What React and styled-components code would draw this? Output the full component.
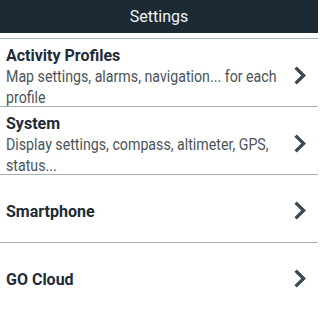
import styled, { createGlobalStyle } from "styled-components";

const GlobalStyle = createGlobalStyle`
  html, body {
    margin: 0;
    padding: 0;
    background: #ffffff;
  }
  body {
    font-family: Roboto, "Liberation Sans", sans-serif;
  }
`;

const Screen = styled.div`
  width: 318px;
  height: 310px;
  overflow: hidden;
  background: #ffffff;
`;

const Header = styled.header`
  height: 33px;
  background: #1b2a35;
  color: #f2f4f5;
  display: flex;
  align-items: center;
  justify-content: center;
  font-size: 16px;
`;

const List = styled.ul`
  list-style: none;
  margin: 5px 0 0 0;
  padding: 0;
  border-top: 1px solid #a7afb0;
`;

const Row = styled.li`
  height: 67px;
  border-bottom: 1px solid #a7afb0;
  display: flex;
  align-items: ${(p) => (p.$hasSub ? "flex-start" : "center")};
  padding: 0 12px 0 6px;
  overflow: hidden;
`;

const Texts = styled.div`
  flex: 1;
  min-width: 0;
  padding-top: ${(p) => (p.$hasSub ? "7px" : "6px")};
`;

const Title = styled.div`
  font-weight: 700;
  font-size: 16px;
  line-height: 20px;
  color: #1e2c37;
`;

/* the device font is a condensed face; squeeze Roboto to the same width */
const Sub = styled.div`
  font-size: 17px;
  line-height: 21px;
  color: #4b5459;
  width: calc(100% / 0.835);
  transform: scaleX(0.835);
  transform-origin: left top;
`;

const Chevron = styled.svg`
  width: 12px;
  height: 19px;
  flex: none;
  margin-left: 14px;
  align-self: center;
  margin-top: ${(p) => (p.$hasSub ? "6px" : "4px")};
`;

const items = [
  { title: "Activity Profiles", sub: "Map settings, alarms, navigation... for each profile" },
  { title: "System", sub: "Display settings, compass, altimeter, GPS, status..." },
  { title: "Smartphone" },
  { title: "GO Cloud" },
];

export default function App() {
  return (
    <Screen>
      <GlobalStyle />
      <Header>Settings</Header>
      <List>
        {items.map((it) => (
          <Row key={it.title} $hasSub={!!it.sub}>
            <Texts $hasSub={!!it.sub}>
              <Title>{it.title}</Title>
              {it.sub && <Sub>{it.sub}</Sub>}
            </Texts>
            <Chevron viewBox="0 0 12 19" $hasSub={!!it.sub}>
              <path d="M1.6 1.6 L9.6 9.5 L1.6 17.4" fill="none" stroke="#3e4a51" strokeWidth="3.4" strokeLinejoin="miter" />
            </Chevron>
          </Row>
        ))}
      </List>
    </Screen>
  );
}
